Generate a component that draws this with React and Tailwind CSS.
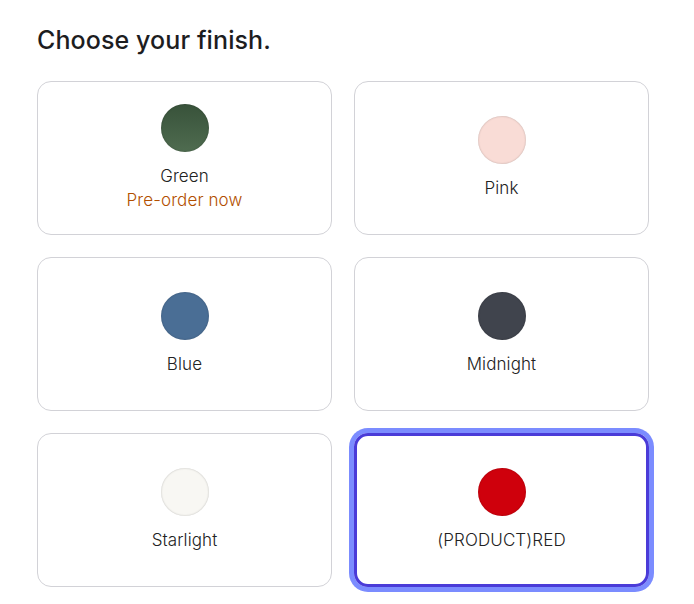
const finishes = [
  { id: 'green', name: 'Green', swatch: 'bg-gradient-to-b from-[#38523a] to-[#4f6c50]', note: 'Pre-order now' },
  { id: 'pink', name: 'Pink', swatch: 'bg-[#f9dcd6]' },
  { id: 'blue', name: 'Blue', swatch: 'bg-[#4a6e95]' },
  { id: 'midnight', name: 'Midnight', swatch: 'bg-[#40444d]' },
  { id: 'starlight', name: 'Starlight', swatch: 'bg-[#f8f7f3]' },
  { id: 'red', name: '(PRODUCT)RED', swatch: 'bg-[#cf000c]', selected: true },
];

export default function App() {
  return (
    <div className="min-h-screen bg-white pl-[37px] pt-[24px] font-['Inter','Liberation_Sans',sans-serif] text-[#333]">
      <h2 className="text-[25px] font-medium leading-[32px] tracking-[0.1px] text-[#1d1d1f]">Choose your finish.</h2>
      <div className="mt-[25px] grid w-[612px] grid-cols-2 gap-x-[22px] gap-y-[22px]">
        {finishes.map((f) => (
          <div
            key={f.id}
            className={
              f.selected
                ? 'flex h-[154px] flex-col items-center justify-center rounded-[14px] border-[3px] border-[#4a3bd8] ring-[5px] ring-[#7b8cff]'
                : 'flex h-[154px] flex-col items-center justify-center rounded-[14px] border border-[#d2d2d7]'
            }
          >
            <span className={`h-[48px] w-[48px] rounded-full shadow-[inset_0_0_2px_rgba(0,0,0,0.25)] ${f.swatch}`}></span>
            <span className="mt-[12px] text-[17px] font-light leading-[24px] tracking-[0.1px] text-[#222]">{f.name}</span>
            {f.note && <span className="text-[17px] font-light leading-[24px] tracking-[0.1px] text-[#b24f00]">{f.note}</span>}
          </div>
        ))}
      </div>
    </div>
  );
}
